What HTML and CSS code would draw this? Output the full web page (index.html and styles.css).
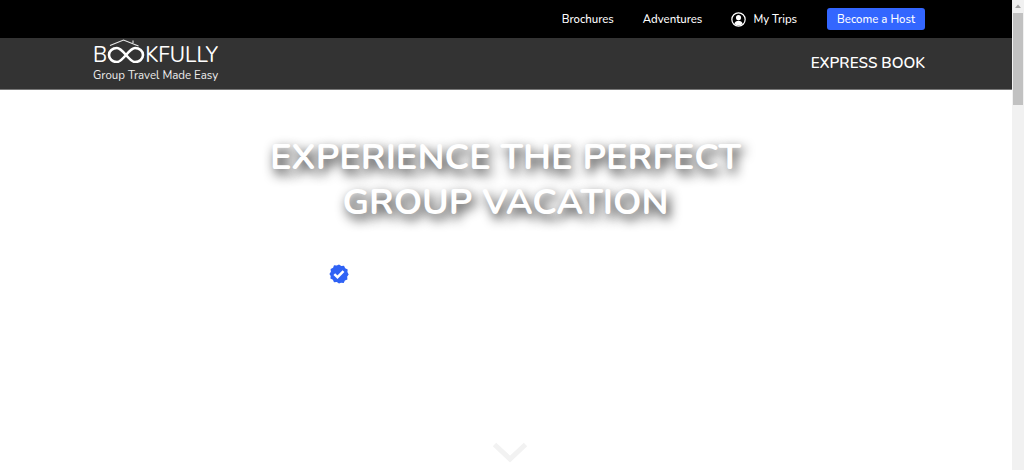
FILE: index.html
```html
<!DOCTYPE html>
<html lang="en">
<head>
<meta charset="utf-8">
<title>Bookfully</title>
<link rel="stylesheet" href="styles.css">
</head>
<body>
<div class="page">
  <header class="topbar">
    <nav class="topnav">
      <a class="navlink">Brochures</a>
      <a class="navlink">Adventures</a>
      <a class="navlink trips">
        <svg class="user" viewBox="0 0 16 16" width="16" height="16"><circle cx="8" cy="8" r="7.100" fill="none" stroke="#fff" stroke-width="1.300"/><circle cx="8" cy="6" r="2.700" fill="#fff"/><path d="M3.600 12.800c.4-2.400 2.400-3.400 4.400-3.400s4 1 4.400 3.400c-1.200 1-2.700 1.500-4.400 1.500s-3.200-.5-4.400-1.500z" fill="#fff"/></svg>
        My Trips</a>
      <a class="hostbtn">Become a Host</a>
    </nav>
  </header>
  <div class="brandbar">
    <div class="logo">
      <div class="wordmark"><span>B</span><svg class="infinity" viewBox="0 0 38 24" width="38" height="24"><path d="M10 9c-4.500 0-8 3-8 7s3.500 7 8 7c6 0 12-14 18-14 4.500 0 8 3 8 7s-3.500 7-8 7c-6 0-12-14-18-14z" fill="none" stroke="#fff" stroke-width="2.600"/><path d="M3 6.500 16.500 1l15 6M26 1.500v2.500" fill="none" stroke="#e8e8e8" stroke-width="1.100"/></svg><span>KFULLY</span></div>
      <div class="tagline">Group Travel Made Easy</div>
    </div>
    <a class="express">EXPRESS BOOK</a>
  </div>
  <main class="hero">
    <h1 class="headline">EXPERIENCE THE PERFECT<br>GROUP VACATION</h1>
    <div class="badge-row">
      <svg class="badge" viewBox="0 0 20 20" width="20" height="20"><path d="M10 .5l2.300 1.500 2.700-.3 1.200 2.500 2.500 1.200-.3 2.700 1.300 2.300-1.500 2.200.2 2.800-2.500 1.100-1.200 2.500-2.700-.3L10 19.500l-2.200-1.500-2.800.300-1.100-2.500-2.500-1.200.3-2.700L.4 10l1.500-2.300-.3-2.700 2.500-1.200L5 1.300l2.800.3z" fill="#2f62f5"/><path d="M5.300 10.200l3.200 3 6-6" fill="none" stroke="#fff" stroke-width="2.500"/></svg>
    </div>
    <svg class="chevron" viewBox="0 0 36 22" width="36" height="22"><path d="M2.500 2.500 18 17 33.500 2.500" fill="none" stroke="#f2f2f2" stroke-width="5"/></svg>
  </main>
  <div class="scrollbar">
    <svg class="arrow" viewBox="0 0 12 13" width="12" height="13"><path d="M3 8h6L6 4.500z" fill="#a3a3a3"/></svg>
    <div class="thumb"></div>
  </div>
</div>
</body>
</html>
```
FILE: styles.css
```css
* { box-sizing: border-box; }
html, body { margin: 0; height: 100%; overflow: hidden; background: #fff; }
body { font-family: "Nunito", "Noto Sans", "Open Sans", sans-serif; color: #fff; }
.page { position: relative; width: 1024px; height: 470px; overflow: hidden; display: flex; flex-direction: column; }
.topbar { height: 38px; background: #000; padding-right: 99px; display: flex; align-items: center; justify-content: flex-end; }
.topnav { display: flex; align-items: center; gap: 29px; font-size: 11.400px; font-weight: 500; }
.navlink { display: flex; align-items: center; gap: 7px; }
.user { width: 15px; height: 15px; }
.hostbtn { background: #3366ff; border-radius: 3px; height: 22px; padding: 0 10px; display: flex; align-items: center; margin-left: 1px; }
.brandbar { height: 52px; background: #333; border-bottom: 1px solid #777; padding: 1px 99px 0 93px; display: flex; justify-content: space-between; align-items: flex-start; }
.logo { display: flex; flex-direction: column; }
.wordmark { display: flex; align-items: flex-end; font-size: 21px; line-height: 24px; height: 24px; }
.wordmark span { line-height: 24px; margin-bottom: -4px; }
.infinity { margin: 0; }
.tagline { font-size: 11.500px; line-height: 15px; margin-top: 5px; color: #eee; }
.express { font-size: 15.200px; font-weight: 600; margin-top: 14px; line-height: 20px; }
.hero { position: relative; flex: 1; display: flex; flex-direction: column; align-items: center; padding-right: 13px; }
.headline { margin: 45px 0 0; font-size: 36.200px; line-height: 45px; font-weight: 700; text-align: center; color: #fff; text-shadow: 3px 5px 12px rgba(0,0,0,.9); }
.badge-row { align-self: flex-start; margin: 39px 0 0 329px; height: 20px; }
.badge { display: block; }
.chevron { position: absolute; left: 492px; top: 352px; }
.scrollbar { position: absolute; right: 0; top: 0; width: 12px; height: 470px; background: #f1f1f1; padding-left: 1px; }
.arrow { display: block; margin-left: -1px; }
.thumb { height: 92px; width: 10px; background: #c1c1c1; }
```
